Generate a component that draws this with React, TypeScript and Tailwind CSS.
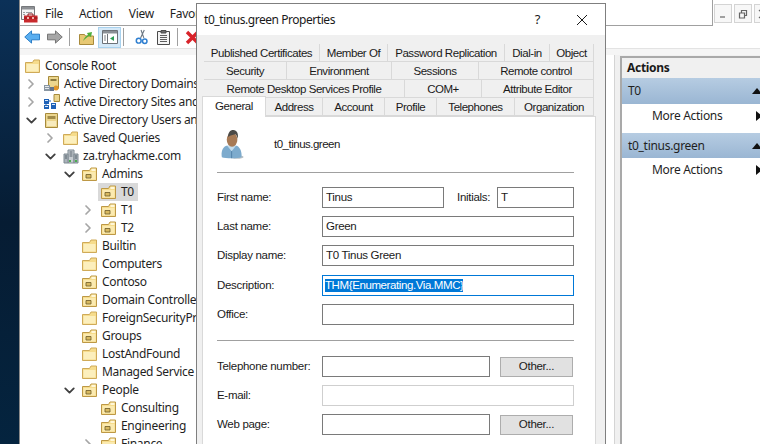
import type { FunctionComponent } from "react";
import { ChevronDown, ChevronRight } from "lucide-react";

type TreeIcon = "folder" | "ou" | "domains" | "sites" | "users" | "domain";

type TreeRow = {
	readonly label: string;
	readonly depth: number;
	readonly icon: TreeIcon;
	readonly chevron?: "closed" | "open";
	readonly selected?: boolean;
};

const treeRows: readonly TreeRow[] = [
	{ label: "Console Root", depth: 0, icon: "folder" },
	{ label: "Active Directory Domains and Trusts", depth: 1, icon: "domains", chevron: "closed" },
	{ label: "Active Directory Sites and Services", depth: 1, icon: "sites", chevron: "closed" },
	{ label: "Active Directory Users and Computers", depth: 1, icon: "users", chevron: "open" },
	{ label: "Saved Queries", depth: 2, icon: "folder", chevron: "closed" },
	{ label: "za.tryhackme.com", depth: 2, icon: "domain", chevron: "open" },
	{ label: "Admins", depth: 3, icon: "ou", chevron: "open" },
	{ label: "T0", depth: 4, icon: "ou", selected: true },
	{ label: "T1", depth: 4, icon: "ou", chevron: "closed" },
	{ label: "T2", depth: 4, icon: "ou", chevron: "closed" },
	{ label: "Builtin", depth: 3, icon: "folder" },
	{ label: "Computers", depth: 3, icon: "folder" },
	{ label: "Contoso", depth: 3, icon: "ou" },
	{ label: "Domain Controllers", depth: 3, icon: "ou" },
	{ label: "ForeignSecurityPrincipals", depth: 3, icon: "folder" },
	{ label: "Groups", depth: 3, icon: "ou" },
	{ label: "LostAndFound", depth: 3, icon: "folder" },
	{ label: "Managed Service Accounts", depth: 3, icon: "folder" },
	{ label: "People", depth: 3, icon: "ou", chevron: "open" },
	{ label: "Consulting", depth: 4, icon: "ou" },
	{ label: "Engineering", depth: 4, icon: "ou" },
	{ label: "Finance", depth: 4, icon: "ou", chevron: "closed" }
];

const FolderIcon: FunctionComponent = () => (
	<svg width="15" height="14" viewBox="0 0 15 14" className="shrink-0">
		<path d="M.5 3.500h7l1.500-2.500h5.500v12.500H.5z" fill="#f6dc8c" stroke="#cfaa58" />
		<path d="M1.500 5h12v7.500h-12z" fill="#fcefbd" />
	</svg>
);

const OuIcon: FunctionComponent = () => (
	<svg width="15" height="14" viewBox="0 0 15 14" className="shrink-0">
		<path d="M.5 3.500h7l1.500-2.500h5.500v12.500H.5z" fill="#f6dc8c" stroke="#bd9845" />
		<path d="M1.500 5h12v7.500h-12z" fill="#fbeab0" />
		<path d="M4 7.500h5v3.500H4z" fill="#d8b960" stroke="#6d5a26" strokeWidth="0.8" />
		<path d="M9.500 1.800h4v2.200h-4z" fill="#fff7d8" />
	</svg>
);

const DomainsIcon: FunctionComponent = () => (
	<svg width="17" height="16" viewBox="0 0 17 16" className="shrink-0">
		<path d="M5.500 .5h10v12h-10z" fill="#ecd68e" stroke="#a68a3c" />
		<path d="M7.500 3h6v2h-6z" fill="#8b7a40" />
		<path d="M1 9h6v6H1z" fill="#8a97a3" />
		<path d="M2 10.500h4M2 12.500h4" stroke="#e5e9ed" />
		<circle cx="13" cy="12" r="2.500" fill="#e0962b" />
		<path d="M7 11h4v4H7z" fill="#64748b" />
	</svg>
);

const SitesIcon: FunctionComponent = () => (
	<svg width="17" height="16" viewBox="0 0 17 16" className="shrink-0">
		<path d="M1 5h5v5H1zM1 11h5v4H1zM8 9h5v6H8z" fill="#1f62b8" />
		<path d="M2 6h3v1H2zM2 12h3v1H2zM9 10h3v1H9z" fill="#dbe9f8" />
		<path d="M11 .5h5.500v7H11z" fill="#ecd68e" stroke="#a68a3c" />
		<path d="M6 7h2M3 10v1" stroke="#1f62b8" />
	</svg>
);

const UsersIcon: FunctionComponent = () => (
	<svg width="13" height="15" viewBox="0 0 13 15" className="shrink-0">
		<path d="M.5 .5h12v14H.5z" fill="#ecd68e" stroke="#a68a3c" />
		<path d="M2.500 3h8v3h-8z" fill="#a28c4a" />
		<path d="M2 8h9v5H2z" fill="#f7ebbe" />
	</svg>
);

const DomainIcon: FunctionComponent = () => (
	<svg width="16" height="15" viewBox="0 0 16 15" className="shrink-0">
		<path d="M5 1h6v13H5z" fill="#c7cdd2" stroke="#7f8a92" />
		<path d="M1 5h4v9H1zM11 5h4v9h-4z" fill="#aab3ba" stroke="#7f8a92" />
		<path d="M6.500 3h3M6.500 5h3M6.500 7h3M2 7h2M12 7h2M2 9h2M12 9h2" stroke="#57636c" />
		<path d="M6 11h2v2H6z" fill="#4caf50" />
		<path d="M12 11h2v2h-2z" fill="#4caf50" />
	</svg>
);

const TreeRowIcon: FunctionComponent<{ readonly icon: TreeIcon }> = ({ icon }) => {
	if (icon === "folder") {
		return <FolderIcon />;
	}
	if (icon === "ou") {
		return <OuIcon />;
	}
	if (icon === "domains") {
		return <DomainsIcon />;
	}
	if (icon === "sites") {
		return <SitesIcon />;
	}
	if (icon === "users") {
		return <UsersIcon />;
	}
	return <DomainIcon />;
};

const MmcIcon: FunctionComponent = () => (
	<svg width="17" height="17" viewBox="0 0 17 17" className="shrink-0">
		<path d="M.5 .5h13v13H.5z" fill="#f4f4f4" stroke="#77797c" />
		<path d="M1 1h12v2.500H1z" fill="#8d9094" />
		<path d="M2 6h2v1H2zM5 6h6v1H5zM2 8h2v1H2z" fill="#9a9da1" />
		<path d="M3 9.500h13.500V16.500H3z" fill="#c8292c" />
		<path d="M3 12h13.500" stroke="#8e1518" />
		<path d="M7 8v2M12 8v2M7 8h5" stroke="#8e1518" fill="none" />
		<path d="M6 11h2v2H6zM11 11h2v2h-2z" fill="#f3b0a8" />
	</svg>
);

const BackIcon: FunctionComponent = () => (
	<svg width="16" height="14" viewBox="0 0 17 14" className="shrink-0">
		<path d="M8 .5v3.500h8.500v6H8v3.500L.8 7z" fill="#59aef0" stroke="#2379c4" />
	</svg>
);

const ForwardIcon: FunctionComponent = () => (
	<svg width="16" height="14" viewBox="0 0 17 14" className="ml-[7px] shrink-0">
		<path d="M9 .5v3.500H.5v6H9v3.500L16.200 7z" fill="#a6a6a6" stroke="#6e6e6e" />
	</svg>
);

const UpFolderIcon: FunctionComponent = () => (
	<svg width="15" height="15" viewBox="0 0 15 15" className="ml-[9px] shrink-0">
		<path d="M.5 4.500h5l1 1.500h8v8.500H.5z" fill="#e7c873" stroke="#a88a3b" />
		<path d="M4 11c1-3 3-5 5-6l-1-2 5-1-1 5-2-1c-2 1-4 3-6 5z" fill="#4eae3c" />
	</svg>
);

const ShowTreeIcon: FunctionComponent = () => (
	<svg width="16" height="14" viewBox="0 0 16 14" className="shrink-0">
		<path d="M.5 .5h15v13H.5z" fill="#fff" stroke="#6d7278" />
		<path d="M1 1h14v2.500H1z" fill="#8b9096" />
		<path d="M5.500 4v9" stroke="#6d7278" />
		<path d="M2 6h2M2 8h2M2 10h2" stroke="#7e8389" />
		<path d="M12 6v5L8 8.500z" fill="#2f9e58" />
	</svg>
);

const CutIcon: FunctionComponent = () => (
	<svg width="13" height="16" viewBox="0 0 14 16" className="ml-[11px] shrink-0">
		<path d="M10 .5 6 9M6.500 .5l3 8.500" stroke="#6c7782" strokeWidth="1.200" fill="none" />
		<circle cx="4" cy="12" r="2.600" fill="none" stroke="#2f7fd0" strokeWidth="1.600" />
		<circle cx="10.500" cy="12.500" r="2.400" fill="none" stroke="#2f7fd0" strokeWidth="1.600" />
	</svg>
);

const PasteIcon: FunctionComponent = () => (
	<svg width="13" height="15" viewBox="0 0 13 15" className="ml-[9px] shrink-0">
		<path d="M.5 1.500h12v13H.5z" fill="#f4f4f4" stroke="#4a4a4a" />
		<path d="M4 .5h5v2.500H4z" fill="#6d6d6d" stroke="#4a4a4a" />
		<path d="M3 5.500h7M3 7.500h7M3 9.500h7M3 11.500h7" stroke="#5d5d5d" />
	</svg>
);

const DeleteIcon: FunctionComponent = () => (
	<svg width="15" height="15" viewBox="0 0 15 15" className="ml-[7px] shrink-0">
		<path d="M2 2l11 11M13 2 2 13" stroke="#d8232a" strokeWidth="3.400" />
	</svg>
);

const UserIcon: FunctionComponent = () => (
	<svg width="23" height="31" viewBox="0 0 26 33" className="shrink-0">
		<ellipse cx="18" cy="30.500" rx="7.500" ry="2" fill="#9aa5ad" opacity="0.7" />
		<path d="M1 31c-1-5 0-11 5-13h12c4 2 6 8 5 13-4 1.500-18 1.500-22 0z" fill="#7dabcd" />
		<path d="M7 18l5 6 5-6" fill="#c4dcec" />
		<path d="M12 24v8" stroke="#4e7ea6" />
		<ellipse cx="12.500" cy="11" rx="6" ry="8" fill="#a77a55" />
		<path d="M8 8c0-5 2-8 6-8s6 4 5 10c-1-3-2-5-3-5-3 1-5 1-8 3z" fill="#4b4a47" />
	</svg>
);

const Tree: FunctionComponent = () => (
	<div className="h-full overflow-hidden bg-white pt-[2px]">
		{treeRows.map((row) => {
			const indent = row.depth === 0 ? 5 : 5 + 19 * (row.depth - 1);
			const rowBody = (
				<>
					<span className="flex w-[15px] shrink-0 items-center justify-center">
						<TreeRowIcon icon={row.icon} />
					</span>
					<span className="ml-[1px] px-[4px] leading-[18px]">{row.label}</span>
				</>
			);

			return (
				<div key={row.label} className="flex h-[18px] items-center whitespace-nowrap" style={{ paddingLeft: indent }}>
					{row.depth > 0 ? (
						<span className="mr-[2px] -ml-[2px] flex w-[19px] shrink-0 items-center">
							{row.chevron === "closed" ? <ChevronRight size={16} strokeWidth={2.6} className="text-[#a6a6a6]" /> : null}
							{row.chevron === "open" ? <ChevronDown size={17} strokeWidth={2.6} className="text-[#404040]" /> : null}
						</span>
					) : null}
					{row.selected === true ? (
						<span className="-ml-[3px] flex h-[18px] items-center bg-[#d9d9d9] pl-[3px]">{rowBody}</span>
					) : (
						rowBody
					)}
				</div>
			);
		})}
	</div>
);

const CollapseArrow: FunctionComponent = () => (
	<svg width="10" height="6" viewBox="0 0 10 6" className="-mr-[2px] shrink-0">
		<path d="M5 0l5 6H0z" fill="#111" />
	</svg>
);

const ExpandArrow: FunctionComponent = () => (
	<svg width="6" height="10" viewBox="0 0 6 10" className="-mr-[2px] shrink-0">
		<path d="M0 0l6 5-6 5z" fill="#111" />
	</svg>
);

const ActionsHeader: FunctionComponent<{ readonly label: string; readonly className: string }> = ({ label, className }) => (
	<div className={`flex items-center justify-between bg-gradient-to-b from-[#b6cce2] to-[#9ab6d3] pl-[6px] ${className}`}>
		<span>{label}</span>
		<CollapseArrow />
	</div>
);

const ActionsItem: FunctionComponent = () => (
	<div className="flex h-[29px] items-start justify-between pt-[3px] pl-[30px]">
		<span>More Actions</span>
		<span className="mt-[4px] flex">
			<ExpandArrow />
		</span>
	</div>
);

const ActionsPanel: FunctionComponent = () => (
	<div className="mt-[1px] flex h-full flex-col border-t-2 border-l-2 border-[#a9a9a9] bg-white">
		<div className="flex h-[20px] items-center bg-[#f0f0f0] pl-[5px] font-bold text-[#1a1a1a]">Actions</div>
		<ActionsHeader label="T0" className="h-[26px]" />
		<ActionsItem />
		<ActionsHeader label="t0_tinus.green" className="h-[25px]" />
		<ActionsItem />
	</div>
);

type TabItem = { readonly label: string; readonly width: number };

const tabRows: readonly (readonly TabItem[])[] = [
	[
		{ label: "Published Certificates", width: 116 },
		{ label: "Member Of", width: 68 },
		{ label: "Password Replication", width: 117 },
		{ label: "Dial-in", width: 45 },
		{ label: "Object", width: 44 }
	],
	[
		{ label: "Security", width: 83 },
		{ label: "Environment", width: 105 },
		{ label: "Sessions", width: 87 },
		{ label: "Remote control", width: 115 }
	],
	[
		{ label: "Remote Desktop Services Profile", width: 201 },
		{ label: "COM+", width: 77 },
		{ label: "Attribute Editor", width: 112 }
	]
];

const generalRow: readonly TabItem[] = [
	{ label: "Address", width: 57 },
	{ label: "Account", width: 62 },
	{ label: "Profile", width: 52 },
	{ label: "Telephones", width: 78 },
	{ label: "Organization", width: 79 }
];

const TabCell: FunctionComponent<{ readonly tab: TabItem }> = ({ tab }) => (
	<div
		className="flex items-center justify-center border-r border-b border-[#d9d9d9] bg-[#f0f0f0] pt-[2px] tracking-[-0.45px]"
		style={{ width: tab.width }}
	>
		{tab.label}
	</div>
);

const TextField: FunctionComponent<{
	readonly value?: string;
	readonly className: string;
}> = ({ value, className }) => (
	<div className={`flex h-[21px] items-center border bg-white pl-[3px] ${className}`}>{value}</div>
);

const FieldRow: FunctionComponent<{ readonly label: string; readonly value?: string }> = ({ label, value }) => (
	<div className="flex h-[21px] items-center">
		<span className="w-[105px]">{label}</span>
		<TextField value={value} className="w-[252px] border-[#7a7a7a]" />
	</div>
);

const OtherRow: FunctionComponent<{ readonly label: string }> = ({ label }) => (
	<div className="flex h-[21px] items-center">
		<span className="w-[105px]">{label}</span>
		<TextField className="w-[168px] border-[#7a7a7a]" />
		<button type="button" className="ml-[10px] h-[20px] w-[73px] border border-[#adadad] bg-[#e1e1e1] text-center">
			Other...
		</button>
	</div>
);

const PropertiesDialog: FunctionComponent = () => (
	<div className="absolute top-[3px] left-[196px] h-[460px] w-[410px] border border-[#7f7f7f] bg-[#f0f0f0] font-['Liberation_Sans',sans-serif] text-[11.5px] tracking-[-0.3px] text-[#1a1a1a]">
		<div className="flex h-[31px] items-center justify-between bg-white pr-[17px] pl-[7px] font-['Noto_Sans',sans-serif] text-[12px] tracking-[-0.45px]">
			<span>t0_tinus.green Properties</span>
			<div className="flex items-center gap-[36px]">
				<span className="text-[13px]">?</span>
				<svg width="12" height="12" viewBox="0 0 12 12">
					<path d="M1 1l10 10M11 1 1 11" stroke="#1a1a1a" strokeWidth="1" />
				</svg>
			</div>
		</div>
		<div className="pt-[9px] pl-[7px]">
			{tabRows.map((tabRow) => (
				<div key={tabRow[0]?.label} className="flex h-[18px]">
					{tabRow.map((tab) => (
						<TabCell key={tab.label} tab={tab} />
					))}
				</div>
			))}
			<div className="-ml-[2px] flex h-[18px]">
				<div className="relative z-10 -mt-[2px] flex h-[21px] w-[64px] items-center justify-center border-x border-t border-[#d9d9d9] bg-white tracking-[-0.45px]">
					General
				</div>
				{generalRow.map((tab) => (
					<TabCell key={tab.label} tab={tab} />
				))}
			</div>
		</div>
		<div className="mx-[5px] h-[400px] w-[394px] border border-[#d9d9d9] bg-white">
			<div className="flex h-[55px] items-center pl-[18px]">
				<UserIcon />
				<span className="ml-[30px] tracking-[-0.5px]">t0_tinus.green</span>
			</div>
			<div className="ml-[14px] w-[357px]">
				<div className="h-px bg-[#a0a0a0]" />
				<div className="mt-[14px] flex flex-col gap-[8px]">
					<div className="flex h-[21px] items-center">
						<span className="w-[105px]">First name:</span>
						<TextField value="Tinus" className="w-[122px] border-[#7a7a7a]" />
						<span className="ml-[13px] w-[40px]">Initials:</span>
						<TextField value="T" className="w-[77px] border-[#7a7a7a]" />
					</div>
					<FieldRow label="Last name:" value="Green" />
					<FieldRow label="Display name:" value="T0 Tinus Green" />
					<div className="mt-[1px] flex h-[21px] items-center">
						<span className="w-[105px]">Description:</span>
						<div className="flex h-[21px] w-[252px] items-center border border-[#0078d7] bg-white pl-[2px]">
							<span className="bg-[#0078d7] leading-[13px] tracking-[-0.4px] text-white">THM{"{Enumerating.Via.MMC}"}</span>
						</div>
					</div>
					<FieldRow label="Office:" />
				</div>
				<div className="mt-[15px] h-px bg-[#a0a0a0]" />
				<div className="mt-[15px] flex flex-col gap-[8px]">
					<OtherRow label="Telephone number:" />
					<div className="flex h-[21px] items-center">
						<span className="w-[105px]">E-mail:</span>
						<TextField className="w-[252px] border-[#cfcfcf]" />
					</div>
					<OtherRow label="Web page:" />
				</div>
			</div>
		</div>
	</div>
);

const WindowButton: FunctionComponent<{ readonly path: string }> = ({ path }) => (
	<span className="flex h-[19px] w-[18px] shrink-0 items-center justify-center border border-[#d4d4d4] bg-[#f7f7f7]">
		<svg width="10" height="10" viewBox="0 0 10 10">
			<path d={path} fill="none" stroke="#666" strokeWidth="1.200" />
		</svg>
	</span>
);

export default function App() {
	return (
		<div className="relative flex h-[444px] w-[760px] overflow-hidden font-['Noto_Sans',sans-serif] text-[12px] tracking-[-0.3px] text-[#1f1f1f]">
			<div className="w-[19px] shrink-0 bg-gradient-to-b from-[#0b3158] via-[#061c33] to-[#04243f]" />
			<div className="flex min-w-0 flex-1 flex-col border-l border-[#8a8a8a] bg-white">
				<div className="flex h-[26px] shrink-0">
					<div className="w-[693px] shrink-0 border-r border-b border-[#a0a0a0]">
						<div className="flex h-[25px] w-[176px] items-center overflow-hidden pt-[3px] pl-[1px] whitespace-nowrap">
							<MmcIcon />
							<div className="ml-[7px] flex gap-[16px]">
								<span>File</span>
								<span>Action</span>
								<span>View</span>
								<span>Favorites</span>
							</div>
						</div>
					</div>
					<div className="ml-[1px] flex gap-[2px] pt-[4px]">
						<WindowButton path="M2 8h5" />
						<WindowButton path="M1.500 4h5v5h-5zM3.500 4V1.500h5v5H6.500" />
						<WindowButton path="M1 1l8 8M9 1 1 9" />
					</div>
				</div>
				<div className="flex h-[22px] shrink-0">
					<div className="flex w-[176px] items-center overflow-hidden pl-[4px]">
						<BackIcon />
						<ForwardIcon />
						<div className="ml-[6px] h-[18px] w-px shrink-0 bg-[#a0a0a0]" />
						<UpFolderIcon />
						<div className="ml-[4px] flex h-[21px] w-[23px] shrink-0 items-center justify-center border border-[#a9d2ee] bg-[#d5e9f8]">
							<ShowTreeIcon />
						</div>
						<div className="ml-[2px] h-[18px] w-px shrink-0 bg-[#a0a0a0]" />
						<CutIcon />
						<PasteIcon />
						<div className="ml-[7px] h-[18px] w-px shrink-0 bg-[#a0a0a0]" />
						<DeleteIcon />
					</div>
				</div>
				<div className="h-[7px] shrink-0 border-t border-[#e3e3e3] bg-[#f5f5f5]" />
				<div className="flex min-h-0 flex-1 bg-[#f0f0f0]">
					<div className="w-[176px] shrink-0">
						<Tree />
					</div>
					<div className="w-[419px] shrink-0 border-r border-[#d4d4d4] bg-white" />
					<div className="ml-[5px] min-w-0 flex-1">
						<ActionsPanel />
					</div>
				</div>
			</div>
			<PropertiesDialog />
		</div>
	);
}
